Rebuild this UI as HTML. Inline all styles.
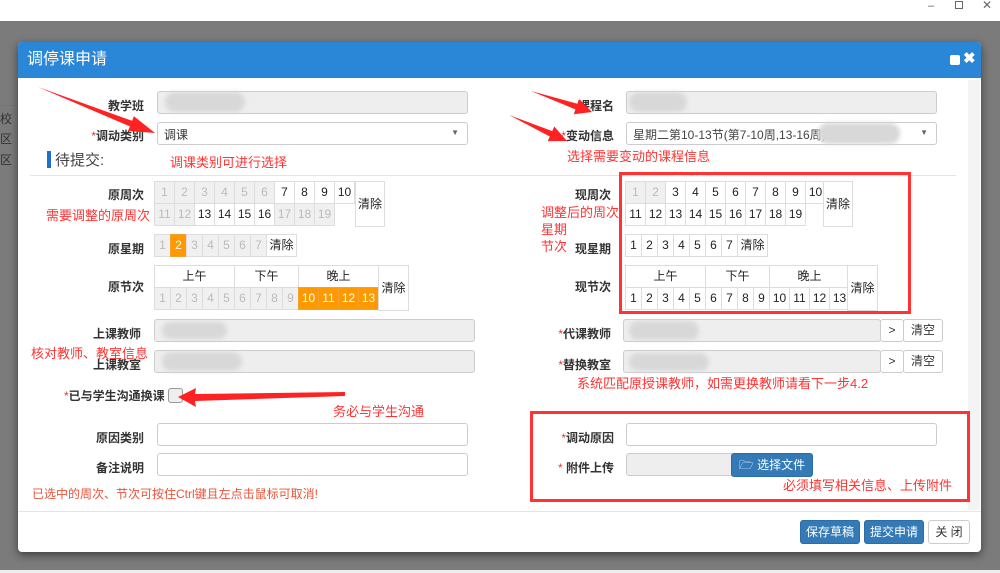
<!DOCTYPE html>
<html><head><meta charset="utf-8">
<style>
*{box-sizing:border-box;margin:0;padding:0}
body{width:1000px;height:573px;overflow:hidden;position:relative;background:#fff;font-family:"Liberation Sans","Noto Sans CJK SC",sans-serif;font-size:12px;color:#333}
.a{position:absolute}
.bd{background:#7b7b7b;left:0;top:21px;width:1000px;height:549px}
.modal{left:18px;top:42px;width:963px;height:510px;background:#fff;border-radius:4px;box-shadow:0 3px 9px rgba(0,0,0,.5)}
.hd{left:18px;top:42px;width:963px;height:36px;background:#2a87d8;border-radius:4px 4px 0 0;color:#fff;font-size:16px;line-height:36px;padding-left:9px}
.lb{font-weight:bold;font-size:12px;text-align:right;width:120px;color:#333}
.st{color:#e33;font-weight:normal}
.in{height:23px;border:1px solid #ccc;border-radius:3px;background:#eee}
.wh{background:#fff}
.red{color:#f33;font-size:13px}
.blur{background:#d8d8d8;border-radius:10px;filter:blur(2px)}
.row{display:flex}
.c{height:23px;border:1px solid #ddd;margin:-1px 0 0 -1px;text-align:center;line-height:21px;font-size:12px;background:#fff;color:#222}
.d{background:#f0f0f0;color:#bbb}
.o{background:#f90;color:#fff;border-color:#f5a030}
.w20{width:21px}.w16{width:17px}
.box{border:3px solid #f33}
.btn{height:24px;border-radius:3px;color:#fff;background:#337ab7;border:1px solid #2e6da4;text-align:center;line-height:22px;font-size:12px}
</style></head><body>
<div class="a" style="left:928px;top:0;font-size:11px;color:#666">–</div>
<div class="a" style="left:955px;top:1px;width:8px;height:8px;border:1px solid #666"></div>
<div class="a" style="left:982px;top:-2px;font-size:12px;color:#666">✕</div>
<div class="a bd"></div>
<div class="a" style="left:0;top:570px;width:1000px;height:3px;background:#eee"></div>
<div class="a" style="left:0;top:105px;width:18px;height:1px;background:#5a7a9a"></div>
<div class="a" style="left:0;top:110px;font-size:12px;color:#333">校</div>
<div class="a" style="left:0;top:130px;font-size:12px;color:#333">区</div>
<div class="a" style="left:0;top:151px;font-size:12px;color:#333">区</div>
<div class="a modal"></div>
<div class="a hd">调停课申请</div>
<div class="a" style="left:950px;top:55px;width:10px;height:10px;background:#fff;border-radius:2px"></div>
<div class="a" style="left:963px;top:49px;color:#fff;font-size:15px;font-weight:bold">✖</div>
<div class="a" style="left:968px;top:80px;width:12px;height:430px;background:#f4f4f4"></div>

<!-- left column -->
<div class="a lb" style="left:24px;top:97px">教学班</div>
<div class="a in" style="left:157px;top:91px;width:311px"></div>
<div class="a blur" style="left:165px;top:92px;width:80px;height:20px"></div>
<div class="a lb" style="left:24px;top:127px"><span class="st">*</span>调动类别</div>
<div class="a in wh" style="left:157px;top:122px;width:311px;padding:3px 6px;font-size:12px">调课<span style="position:absolute;right:8px;top:5px;font-size:8px;color:#666">▼</span></div>
<div class="a" style="left:47px;top:151px;width:4px;height:17px;background:#1e6fcf"></div>
<div class="a" style="left:55px;top:149px;font-size:15px;color:#444">待提交:</div>
<div class="a red" style="left:170px;top:152px">调课类别可进行选择</div>
<div class="a" style="left:30px;top:175px;width:926px;height:1px;background:#e5e5e5"></div>

<div class="a lb" style="left:24px;top:186px">原周次</div>
<div class="a red" style="left:46px;top:205px">需要调整的原周次</div>
<div class="a" style="left:155px;top:182px">
<div class="row"><div class="c w20 d">1</div><div class="c w20 d">2</div><div class="c w20 d">3</div><div class="c w20 d">4</div><div class="c w20 d">5</div><div class="c w20 d">6</div><div class="c w20">7</div><div class="c w20">8</div><div class="c w20">9</div><div class="c w20">10</div></div>
<div class="row"><div class="c w20 d">11</div><div class="c w20 d">12</div><div class="c w20">13</div><div class="c w20">14</div><div class="c w20">15</div><div class="c w20">16</div><div class="c w20 d">17</div><div class="c w20 d">18</div><div class="c w20 d">19</div></div>
</div>
<div class="a c" style="left:355px;top:181px;width:30px;height:46px;line-height:44px;margin:0">清除</div>

<div class="a lb" style="left:24px;top:240px">原星期</div>
<div class="a row" style="left:155px;top:235px"><div class="c w16 d">1</div><div class="c w16 o">2</div><div class="c w16 d">3</div><div class="c w16 d">4</div><div class="c w16 d">5</div><div class="c w16 d">6</div><div class="c w16 d">7</div><div class="c" style="width:31px">清除</div></div>

<div class="a lb" style="left:24px;top:278px">原节次</div>
<div class="a" style="left:155px;top:266px">
<div class="row"><div class="c" style="width:81px">上午</div><div class="c" style="width:65px">下午</div><div class="c" style="width:81px">晚上</div></div>
<div class="row"><div class="c w16 d">1</div><div class="c w16 d">2</div><div class="c w16 d">3</div><div class="c w16 d">4</div><div class="c w16 d">5</div><div class="c w16 d">6</div><div class="c w16 d">7</div><div class="c w16 d">8</div><div class="c w16 d">9</div><div class="c w20 o">10</div><div class="c w20 o">11</div><div class="c w20 o">12</div><div class="c w20 o">13</div></div>
</div>
<div class="a c" style="left:378px;top:265px;width:31px;height:46px;line-height:44px;margin:0">清除</div>

<div class="a lb" style="left:21px;top:325px">上课教师</div>
<div class="a in" style="left:154px;top:319px;width:321px"></div>
<div class="a blur" style="left:162px;top:322px;width:65px;height:17px"></div>
<div class="a red" style="left:31px;top:343px">核对教师、教室信息</div>
<div class="a lb" style="left:21px;top:356px">上课教室</div>
<div class="a in" style="left:154px;top:350px;width:321px"></div>
<div class="a blur" style="left:162px;top:352px;width:80px;height:19px"></div>

<div class="a" style="left:64px;top:387px;font-weight:bold;font-size:12px"><span class="st">*</span>已与学生沟通换课</div>
<div class="a" style="left:168px;top:388px;width:15px;height:15px;border:1px solid #999;border-radius:3px;background:#eee"></div>
<div class="a red" style="left:333px;top:401px">务必与学生沟通</div>

<div class="a lb" style="left:24px;top:429px">原因类别</div>
<div class="a in wh" style="left:157px;top:423px;width:311px"></div>
<div class="a lb" style="left:24px;top:459px">备注说明</div>
<div class="a in wh" style="left:157px;top:453px;width:311px"></div>
<div class="a" style="left:32px;top:485px;color:#e8543a;font-size:12px">已选中的周次、节次可按住Ctrl键且左点击鼠标可取消!</div>

<!-- right column -->
<div class="a lb" style="left:494px;top:97px">课程名</div>
<div class="a in" style="left:626px;top:91px;width:311px"></div>
<div class="a blur" style="left:629px;top:92px;width:58px;height:20px"></div>
<div class="a lb" style="left:494px;top:127px"><span class="st">*</span>变动信息</div>
<div class="a in wh" style="left:626px;top:122px;width:311px;padding:3px 6px;font-size:12px;color:#444">星期二第10-13节(第7-10周,13-16周)<span style="position:absolute;right:8px;top:5px;font-size:8px;color:#666">▼</span></div>
<div class="a blur" style="left:818px;top:123px;width:82px;height:21px"></div>
<div class="a red" style="left:567px;top:146px">选择需要变动的课程信息</div>

<div class="a lb" style="left:491px;top:186px">现周次</div>
<div class="a red" style="left:541px;top:204px;line-height:17px">调整后的周次<br>星期<br>节次</div>
<div class="a" style="left:626px;top:182px">
<div class="row"><div class="c w20 d">1</div><div class="c w20 d">2</div><div class="c w20">3</div><div class="c w20">4</div><div class="c w20">5</div><div class="c w20">6</div><div class="c w20">7</div><div class="c w20">8</div><div class="c w20">9</div><div class="c w20">10</div></div>
<div class="row"><div class="c w20">11</div><div class="c w20">12</div><div class="c w20">13</div><div class="c w20">14</div><div class="c w20">15</div><div class="c w20">16</div><div class="c w20">17</div><div class="c w20">18</div><div class="c w20">19</div></div>
</div>
<div class="a c" style="left:823px;top:181px;width:30px;height:46px;line-height:44px;margin:0">清除</div>
<div class="a lb" style="left:491px;top:240px">现星期</div>
<div class="a row" style="left:626px;top:235px"><div class="c w16">1</div><div class="c w16">2</div><div class="c w16">3</div><div class="c w16">4</div><div class="c w16">5</div><div class="c w16">6</div><div class="c w16">7</div><div class="c" style="width:31px">清除</div></div>
<div class="a lb" style="left:491px;top:278px">现节次</div>
<div class="a" style="left:626px;top:266px">
<div class="row"><div class="c" style="width:81px">上午</div><div class="c" style="width:65px">下午</div><div class="c" style="width:81px">晚上</div></div>
<div class="row"><div class="c w16">1</div><div class="c w16">2</div><div class="c w16">3</div><div class="c w16">4</div><div class="c w16">5</div><div class="c w16">6</div><div class="c w16">7</div><div class="c w16">8</div><div class="c w16">9</div><div class="c w20">10</div><div class="c w20">11</div><div class="c w20">12</div><div class="c w20">13</div></div>
</div>
<div class="a c" style="left:847px;top:265px;width:31px;height:46px;line-height:44px;margin:0">清除</div>
<div class="a box" style="left:619px;top:172px;width:292px;height:142px"></div>

<div class="a lb" style="left:491px;top:325px"><span class="st">*</span>代课教师</div>
<div class="a in" style="left:623px;top:319px;width:258px"></div>
<div class="a in wh" style="left:880px;top:319px;width:24px;text-align:center;line-height:21px">&gt;</div>
<div class="a in wh" style="left:903px;top:319px;width:40px;text-align:center;line-height:21px">清空</div>
<div class="a blur" style="left:629px;top:321px;width:70px;height:19px"></div>
<div class="a lb" style="left:491px;top:356px"><span class="st">*</span>替换教室</div>
<div class="a in" style="left:623px;top:350px;width:258px"></div>
<div class="a in wh" style="left:880px;top:350px;width:24px;text-align:center;line-height:21px">&gt;</div>
<div class="a in wh" style="left:903px;top:350px;width:40px;text-align:center;line-height:21px">清空</div>
<div class="a blur" style="left:629px;top:353px;width:80px;height:18px"></div>
<div class="a red" style="left:577px;top:373px">系统匹配原授课教师，如需更换教师请看下一步4.2</div>

<div class="a box" style="left:530px;top:411px;width:440px;height:91px"></div>
<div class="a lb" style="left:494px;top:429px"><span class="st">*</span>调动原因</div>
<div class="a in wh" style="left:626px;top:423px;width:311px"></div>
<div class="a lb" style="left:494px;top:459px"><span class="st">* </span>附件上传</div>
<div class="a in" style="left:626px;top:453px;width:108px"></div>
<div class="a btn" style="left:731px;top:453px;width:82px;height:24px">🗁 选择文件</div>
<div class="a red" style="left:783px;top:475px">必须填写相关信息、上传附件</div>

<div class="a" style="left:18px;top:511px;width:963px;height:1px;background:#e5e5e5"></div>
<div class="a btn" style="left:800px;top:520px;width:60px">保存草稿</div>
<div class="a btn" style="left:864px;top:520px;width:60px">提交申请</div>
<div class="a btn" style="left:928px;top:520px;width:42px;background:#fff;color:#333;border-color:#ccc">关 闭</div>

<!-- arrows -->
<svg class="a" style="left:0;top:0" width="1000" height="573">
<g fill="#f22">
<polygon points="38,87 132.1,120.8 133.9,116.2 155,133 128.1,131 129.9,126.4"/>
<polygon points="531,91 577.4,103.8 579,99 592,112 573.8,114.2 575.4,109.4"/>
<polygon points="509,115 552.2,131.1 554.3,126.5 567,141 547.7,141.1 549.8,136.5"/>
<polygon points="178,397 196,388 195,394 345,392 345,396 195,401 196,407"/>
</g>
</svg>
</body></html>
